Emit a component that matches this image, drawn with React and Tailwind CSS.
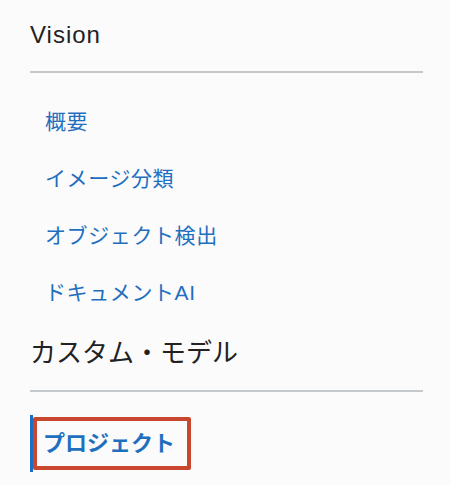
import React from "react";

const visionLinks = ["概要", "イメージ分類", "オブジェクト検出", "ドキュメントAI"];

export default function App() {
  return (
    <div
      className="min-h-screen bg-[#fbfbfc] pl-[30px] pr-[27px] pt-[20px]"
      style={{ fontFamily: '"Liberation Sans", "Noto Sans CJK JP", sans-serif' }}
    >
      {/* Vision section */}
      <h2 className="text-[24px] leading-[30px] tracking-[1px] text-[#222]">Vision</h2>
      <div className="mt-[21px] h-[2px] bg-[#c5c9ce]" />

      <ul className="mt-[20px] pl-[15px]">
        {visionLinks.map((label) => (
          <li key={label} className="flex h-[57px] items-center text-[21px] tracking-[0.6px] text-[#1f6fbf]">
            {label}
          </li>
        ))}
      </ul>

      {/* Custom model section */}
      <h2 className="mt-[15px] text-[26px] leading-[34px] text-[#222]">カスタム・モデル</h2>
      <div className="mt-[20px] h-[2px] bg-[#c5c9ce]" />

      <div className="mt-[23px] flex border-l-[3px] border-[#1a6fc4] py-[2px]">
        <span className="rounded-[2px] border-4 border-[#c9472f] pl-[6px] pr-[12px] py-[9px] text-[22px] font-bold leading-[27px] text-[#1f6fbf]">
          プロジェクト
        </span>
      </div>
    </div>
  );
}
